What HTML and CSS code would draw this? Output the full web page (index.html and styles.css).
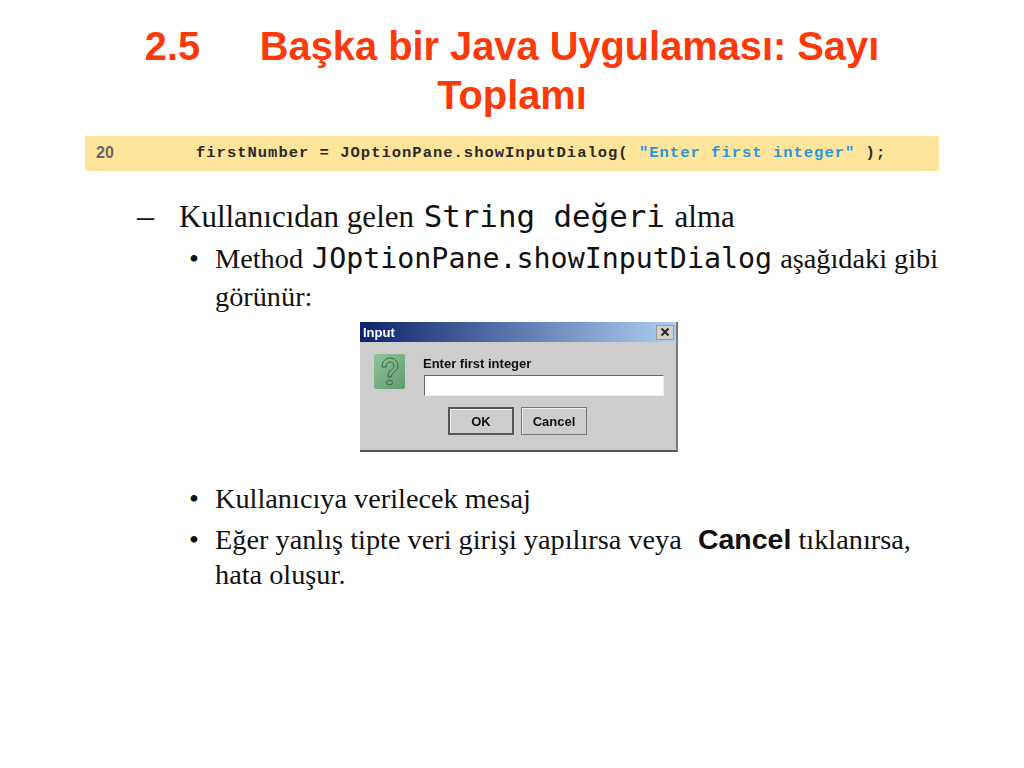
FILE: index.html
```html
<!DOCTYPE html>
<html lang="tr">
<head>
<meta charset="utf-8">
<title>2.5 Başka bir Java Uygulaması: Sayı Toplamı</title>
<link rel="stylesheet" href="styles.css">
</head>
<body>
<main class="slide">
  <h1 class="title"><span class="title-num">2.5</span>Başka bir Java Uygulaması: Sayı<br>Toplamı</h1>
  <div class="code"><span class="line-no">20</span><span class="code-text">firstNumber = JOptionPane.showInputDialog( <span class="str">"Enter first integer"</span> );</span></div>
  <div class="level1"><span class="dash">–</span><span>Kullanıcıdan gelen <code class="mono-l">String değeri</code> alma</span></div>
  <div class="level2 first"><span class="bullet">•</span><span>Method <code class="mono-m">JOptionPane.showInputDialog</code> aşağıdaki gibi görünür:</span></div>
  <div class="dialog">
    <div class="dialog-bar"><span class="dialog-title">Input</span><span class="dialog-close"><svg width="12" height="12" viewBox="0 0 12 12"><path d="M2.500 2.500L9.500 9.500M9.500 2.500L2.500 9.500" stroke="#222" stroke-width="1.800" fill="none"/></svg></span></div>
    <div class="dialog-body">
      <div class="dialog-icon"><svg width="22" height="32" viewBox="0 0 22 32"><path d="M3 11C3 5 7 2 11 2S19 5 19 10C19 14 16 15 14 17C13 18 12.500 19 12.500 21H9C9 18 9.500 16.500 11 15C13 13 15 12.500 15 10C15 7.500 13 6 11 6S7 7.500 7 11Z" fill="none" stroke="#3d6348" stroke-width="1"/><ellipse cx="10.500" cy="26.500" rx="3" ry="2.400" fill="none" stroke="#3d6348" stroke-width="1"/></svg></div>
      <div class="dialog-main">
        <div class="dialog-label">Enter first integer</div>
        <div class="dialog-input"></div>
      </div>
    </div>
    <div class="dialog-buttons"><span class="btn btn-default">OK</span><span class="btn">Cancel</span></div>
  </div>
  <div class="level2 after-dialog"><span class="bullet">•</span><span>Kullanıcıya verilecek mesaj</span></div>
  <div class="level2 next"><span class="bullet">•</span><span>Eğer yanlış tipte veri girişi yapılırsa veya &nbsp;<b class="sans-b">Cancel</b> tıklanırsa, hata oluşur.</span></div>
</main>
</body>
</html>
```
FILE: styles.css
```css
html, body { margin: 0; padding: 0; background: #fff; }
.slide { width: 1024px; height: 768px; overflow: hidden; font-family: "Liberation Serif", serif; color: #111; }
.title { margin: 0; padding: 22px 0 0; width: 1024px; text-align: center; font: bold 39.800px/49px "Liberation Sans", sans-serif; color: #fb3a0a; }
.title-num { display: inline-block; width: 115px; text-align: left; }
.code { margin: 16px 85px 0; height: 35px; background: #ffe49c; display: flex; align-items: center; font: bold 15.500px "Liberation Mono", monospace; color: #2a2a2a; }
.line-no { width: 111px; padding-left: 11px; box-sizing: border-box; font: bold 16px "Liberation Sans", sans-serif; color: #666; padding-bottom: 2px; }
.code-text { letter-spacing: 1px; white-space: pre; padding-bottom: 2px; }
.str { color: #2a96dc; }
.level1 { display: flex; margin: 27px 0 0 137px; line-height: 36px; font-size: 31px; }
.dash { width: 42px; flex: none; font-size: 34px; }
.level2 { display: flex; margin-left: 189px; width: 750px; line-height: 38px; font-size: 28.300px; }
.level2.first { margin-top: 5px; }
.bullet { width: 26px; flex: none; }
.mono-l { font: 30.800px "DejaVu Sans Mono", monospace; margin: 0 2px; }
.mono-m { font: 28.300px "DejaVu Sans Mono", monospace; margin: 0 1px 0 2px; }
.sans-b { font: bold 28.500px "Liberation Sans", sans-serif; margin-left: 2px; }
.dialog { box-sizing: border-box; width: 318px; height: 130px; margin: 6px 0 0 360px; background: #cdcdcd; border-right: 2px solid #777; border-bottom: 2px solid #555; font-family: "Liberation Sans", sans-serif; color: #111; filter: blur(0.4px); }
.dialog-bar { height: 20px; background: linear-gradient(90deg, #0c246c, #aed0f2); display: flex; justify-content: space-between; align-items: center; padding: 0 2px 0 3px; }
.dialog-title { color: #fff; font: bold 13px "Liberation Sans", sans-serif; }
.dialog-close { width: 16px; height: 13px; background: #d4d0c8; border: 1px solid #999; display: flex; align-items: center; justify-content: center; }
.dialog-body { display: flex; padding-top: 12px; }
.dialog-icon { width: 31px; height: 35px; margin-left: 14px; background: linear-gradient(135deg, #92c49a, #5f9a6e); border-radius: 2px; display: flex; align-items: center; justify-content: center; }
.dialog-main { margin-left: 18px; }
.dialog-label { font: bold 13px/19px "Liberation Sans", sans-serif; margin-bottom: -2px; }
.dialog-input { box-sizing: border-box; width: 240px; height: 21px; margin-top: 4px; margin-left: 1px; background: #fff; border: 1px solid #666; border-right-color: #eee; border-bottom-color: #eee; }
.dialog-buttons { display: flex; gap: 7px; margin: 11px 0 0 88px; }
.btn { box-sizing: border-box; width: 66px; height: 28px; border: 1px solid #777; box-shadow: inset 1px 1px 0 #eee; display: flex; align-items: center; justify-content: center; font: bold 13px "Liberation Sans", sans-serif; }
.btn-default { border: 2px solid #555; }
.level2.after-dialog { margin-top: 28px; }
.level2.next { margin-top: 4px; line-height: 35px; }
```
